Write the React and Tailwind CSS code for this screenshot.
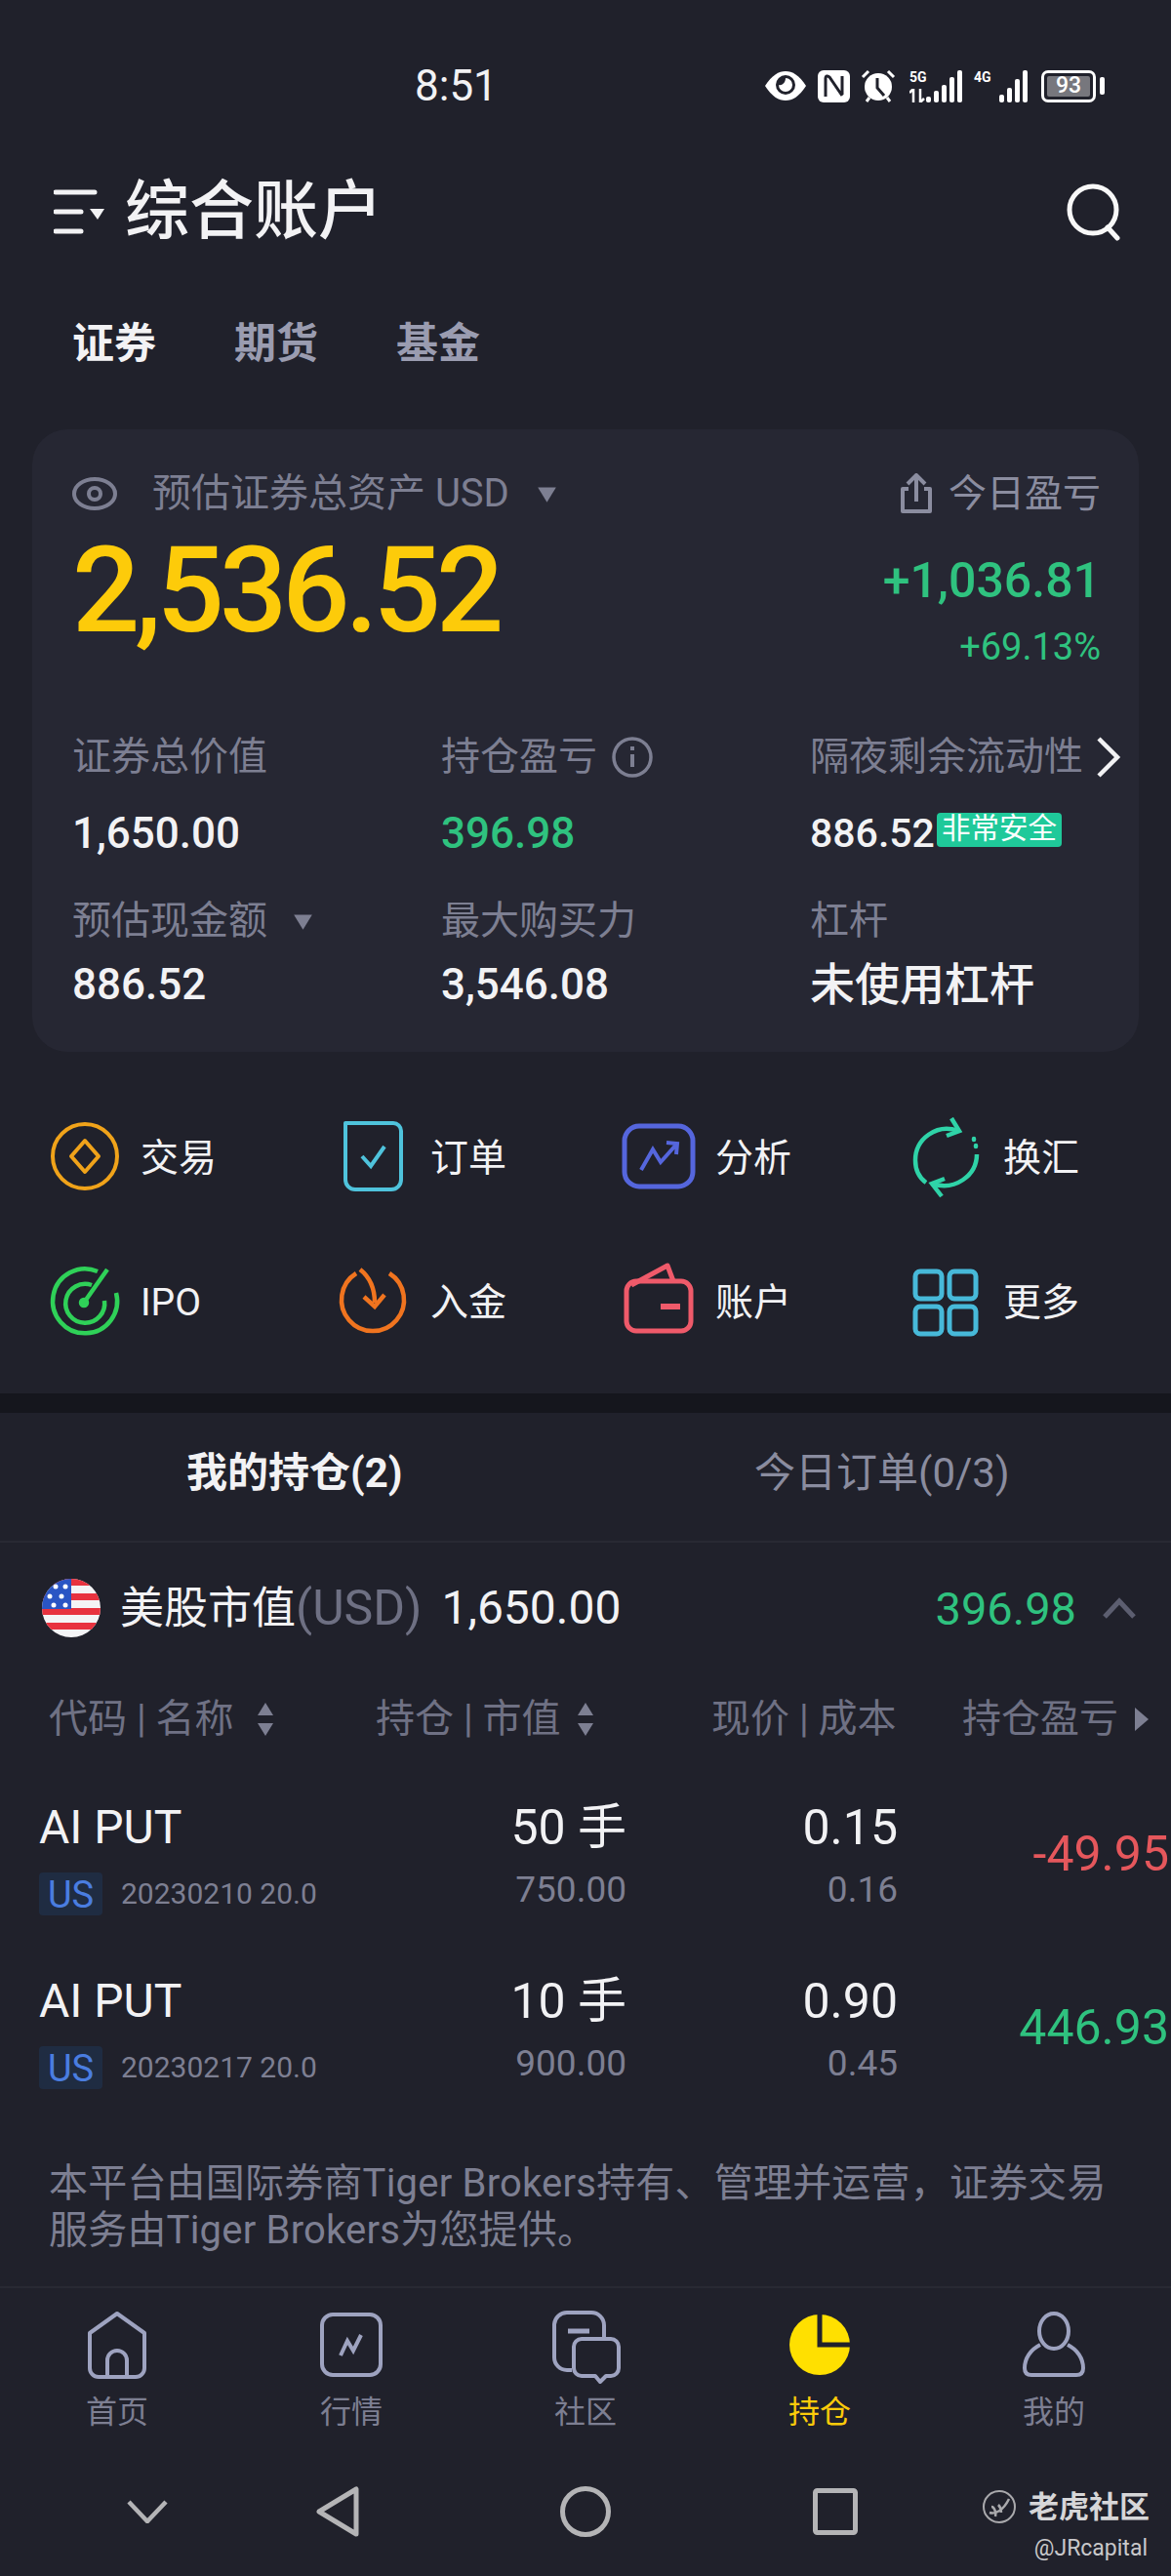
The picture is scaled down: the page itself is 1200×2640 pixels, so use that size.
const metrics = [
  { label: '证券总价值', value: '1,650.00' },
  { label: '持仓盈亏', value: '396.98', green: true, info: true },
  { label: '隔夜剩余流动性', value: '886.52', badge: '非常安全' },
  { label: '预估现金额', value: '886.52', caret: true },
  { label: '最大购买力', value: '3,546.08' },
  { label: '杠杆', value: '未使用杠杆', big: true },
]

const positions = [
  { date: '20230210 20.0', qty: '50 手', mv: '750.00', price: '0.15', cost: '0.16', pnl: '-49.95', loss: true },
  { date: '20230217 20.0', qty: '10 手', mv: '900.00', price: '0.90', cost: '0.45', pnl: '446.93' },
]

function Caret({ className }) {
  return (
    <svg viewBox="0 0 18 16" className={className}>
      <path d="M1 2h16L9 15z" fill="#7d7f92" />
    </svg>
  )
}

function SortArrows() {
  return (
    <svg viewBox="0 0 20 38" className="w-[20px] h-[38px]">
      <path d="M10 2l8 13H2zM10 36L2 23h16z" fill="#7d7f92" />
    </svg>
  )
}

function Bars({ heights }) {
  return (
    <div className="flex items-end gap-[3px] h-[33px]">
      {heights.map((h, i) => (
        <svg key={i} viewBox="0 0 5 33" className="w-[5px] h-[33px]">
          <rect x="0" y={33 - h} width="5" height={h} rx="2" fill="#fff" />
        </svg>
      ))}
    </div>
  )
}

function StatusIcons() {
  return (
    <div className="flex items-center">
      <svg viewBox="0 0 44 32" className="w-[44px] h-[32px]">
        <path d="M1 16C8 5 15 1 22 1s14 4 21 15c-7 11-14 15-21 15S8 27 1 16z" fill="#fff" />
        <circle cx="22" cy="15" r="10" fill="#20212b" />
        <path d="M22 8a7 7 0 1 1-7 7c3 1 7-2 7-7z" fill="#fff" />
      </svg>
      <svg viewBox="0 0 33 33" className="w-[33px] h-[33px] ml-[11px]">
        <rect width="33" height="33" rx="6" fill="#fff" />
        <path d="M8 27V8c0-2 2-3 4-1l13 19M25 6v19" fill="none" stroke="#20212b" strokeWidth="3" />
      </svg>
      <svg viewBox="0 0 36 34" className="w-[36px] h-[34px] ml-[11px]">
        <circle cx="18" cy="18" r="14" fill="#fff" />
        <path d="M17 9v10l7 8" fill="none" stroke="#20212b" strokeWidth="3" />
        <path d="M2 8l6-6M34 8l-6-6M6 33l3-4M30 33l-3-4" stroke="#fff" strokeWidth="3" />
      </svg>
      <div className="relative w-[54px] h-[33px] ml-[14px]">
        <span className="absolute left-0 top-0 text-[14px] leading-[14px] font-bold text-white">5G</span>
        <svg viewBox="0 0 16 14" className="absolute left-0 bottom-0 w-[16px] h-[14px]">
          <path d="M4 0v14M0 4l4-4M11 0v14l4-4" fill="none" stroke="#fff" strokeWidth="2.5" />
        </svg>
        <div className="absolute right-0 bottom-0">
          <Bars heights={[6, 12, 18, 26, 33]} />
        </div>
      </div>
      <div className="relative w-[55px] h-[33px] ml-[12px]">
        <span className="absolute left-0 top-0 text-[14px] leading-[14px] font-bold text-white">4G</span>
        <div className="absolute right-0 bottom-0">
          <Bars heights={[8, 15, 24, 33]} />
        </div>
      </div>
      <div className="ml-[14px] w-[56px] h-[33px] rounded-[7px] border-[3px] border-white p-[3px]">
        <div className="h-full rounded-[2px] bg-[#77777d] flex items-center justify-center text-[23px] font-medium text-white">93</div>
      </div>
      <div className="ml-[4px] w-[5px] h-[18px] rounded-[2px] bg-white" />
    </div>
  )
}

const actionIcons = {
  trade: (
    <g fill="none" stroke="#f0a31a" strokeWidth="4">
      <circle cx="39" cy="40" r="33" />
      <path d="M39 24l14 16-14 16-14-16z" strokeLinejoin="round" />
    </g>
  ),
  order: (
    <g fill="none" stroke="#4fc3dc" strokeWidth="4">
      <path d="M18 6h40a8 8 0 0 1 8 8v50a10 10 0 0 1-10 10H19a10 10 0 0 1-10-10V6z" strokeLinejoin="round" />
      <path d="M26 40l9 10 14-20" />
    </g>
  ),
  analyze: (
    <g fill="none" stroke="#5566dd" strokeWidth="5">
      <rect x="3" y="9" width="70" height="62" rx="15" />
      <path d="M20 54l12-21 8 13 16-18M46 26l11 1-1 11" strokeWidth="4" />
    </g>
  ),
  exchange: (
    <g fill="none" stroke="#2fd3a8" strokeWidth="4.5">
      <path d="M50 14C28 6 6 22 6 44c0 10 4 18 11 23" />
      <path d="M43 1l8 13-13 5" />
      <path d="M23 68c23 8 46-8 46-30" />
      <path d="M33 81l-10-13 13-5" />
      <path d="M66 22v1M68 29v1" strokeLinecap="round" />
    </g>
  ),
  ipo: (
    <g fill="none" stroke="#2fd158" strokeWidth="4.5">
      <path d="M52 10A33 33 0 1 0 71 32" />
      <path d="M46 24a20 20 0 1 0 13 16" />
      <path d="M38 42L62 8" />
      <circle cx="38" cy="42" r="3" fill="#2fd158" />
    </g>
  ),
  deposit: (
    <g fill="none" stroke="#f0741f" strokeWidth="4.5">
      <path d="M54 12a32 32 0 1 1-34 0" />
      <path d="M24 8c10 8 15 20 15 34M28 36l11 10 10-12" />
    </g>
  ),
  account: (
    <g fill="none" stroke="#ef5a6a" strokeWidth="5">
      <rect x="5" y="20" width="66" height="51" rx="10" />
      <path d="M10 24L47 4l6 16" strokeLinejoin="round" />
      <path d="M40 46h20" strokeWidth="6" />
    </g>
  ),
  more: (
    <g fill="none" stroke="#47b9d9" strokeWidth="5">
      <rect x="6" y="10" width="27" height="28" rx="5" />
      <rect x="41" y="10" width="27" height="28" rx="5" />
      <rect x="6" y="46" width="27" height="28" rx="5" />
      <rect x="41" y="46" width="27" height="28" rx="5" />
    </g>
  ),
}

const actions = [
  { icon: 'trade', label: '交易' },
  { icon: 'order', label: '订单' },
  { icon: 'analyze', label: '分析' },
  { icon: 'exchange', label: '换汇' },
  { icon: 'ipo', label: 'IPO' },
  { icon: 'deposit', label: '入金' },
  { icon: 'account', label: '账户' },
  { icon: 'more', label: '更多' },
]

const navItems = [
  {
    label: '首页',
    icon: (
      <g fill="none" stroke="#9ea3c0" strokeWidth="4">
        <path d="M8 24L36 4l28 20v36a9 9 0 0 1-9 9H17a9 9 0 0 1-9-9z" strokeLinejoin="round" />
        <path d="M26 68V52a10 10 0 0 1 20 0v16" />
      </g>
    ),
  },
  {
    label: '行情',
    icon: (
      <g fill="none" stroke="#9ea3c0" strokeWidth="4">
        <rect x="6" y="5" width="60" height="62" rx="11" />
        <path d="M25 47l7-15 6 10 8-16" />
      </g>
    ),
  },
  {
    label: '社区',
    icon: (
      <g fill="none" stroke="#9ea3c0" strokeWidth="4">
        <path d="M22 62h-5a13 13 0 0 1-13-13V15A13 13 0 0 1 17 3h25a13 13 0 0 1 13 13v14" />
        <path d="M18 22h22" strokeWidth="5" />
        <path d="M32 30h30a8 8 0 0 1 8 8v22a8 8 0 0 1-8 8h-5l-6 6-5-6H32a8 8 0 0 1-8-8V38a8 8 0 0 1 8-8z" strokeLinejoin="round" />
      </g>
    ),
  },
  {
    label: '持仓',
    active: true,
    icon: (
      <g>
        <circle cx="36" cy="36" r="31" fill="#ffe000" />
        <path d="M36 3v33h31" fill="none" stroke="#20212b" strokeWidth="5" />
      </g>
    ),
  },
  {
    label: '我的',
    icon: (
      <g fill="none" stroke="#9ea3c0" strokeWidth="4">
        <ellipse cx="36" cy="22" rx="15" ry="18" />
        <path d="M22 36C12 41 6 50 6 60c0 5 3 7 7 7h46c4 0 7-2 7-7 0-10-6-19-16-24" />
      </g>
    ),
  },
]

function Flag() {
  return (
    <svg viewBox="0 0 60 60" className="w-[60px] h-[60px]">
      <defs>
        <clipPath id="flag-clip">
          <circle cx="30" cy="30" r="30" />
        </clipPath>
      </defs>
      <g clipPath="url(#flag-clip)">
        <rect width="60" height="60" fill="#f4f4f6" />
        <rect y="0" width="60" height="7" fill="#e8323f" />
        <rect y="15" width="60" height="7" fill="#e8323f" />
        <rect y="30" width="60" height="7" fill="#e8323f" />
        <rect y="45" width="60" height="7" fill="#e8323f" />
        <rect width="30" height="31" fill="#2a55c4" />
        <circle cx="14" cy="8" r="2.5" fill="#fff" />
        <circle cx="24" cy="8" r="2.5" fill="#fff" />
        <circle cx="8" cy="18" r="2.5" fill="#fff" />
        <circle cx="20" cy="18" r="2.5" fill="#fff" />
        <circle cx="12" cy="27" r="2.5" fill="#fff" />
        <circle cx="24" cy="27" r="2.5" fill="#fff" />
      </g>
    </svg>
  )
}

export default function App() {
  return (
    <div className="relative w-[1200px] h-[2640px] overflow-hidden bg-[#20212b] text-[#f2f2f4] font-['Roboto','Noto_Sans_CJK_SC',sans-serif]">
      {/* status bar */}
      <div className="flex items-center h-[72px] mt-[52px] pl-[425px] pr-[68px]">
        <span className="text-[44px] leading-none">8:51</span>
        <div className="ml-auto"><StatusIcons /></div>
      </div>

      {/* header */}
      <div className="flex items-center h-[92px] mt-[47px] pl-[55px] pr-[50px]">
        <svg viewBox="0 0 52 50" className="w-[52px] h-[50px]">
          <path d="M2 5h40M2 25h26M2 45h26" stroke="#f2f2f4" strokeWidth="5" strokeLinecap="round" />
          <path d="M37 22h15l-7 11z" fill="#f2f2f4" />
        </svg>
        <span className="ml-[21px] text-[66px] leading-none font-medium">综合账户</span>
        <svg viewBox="0 0 58 60" className="ml-auto w-[58px] h-[60px]">
          <circle cx="28" cy="28" r="24" fill="none" stroke="#f8f8f8" strokeWidth="5" />
          <path d="M43 46l10 11" stroke="#f8f8f8" strokeWidth="5" strokeLinecap="round" />
        </svg>
      </div>

      {/* tabs */}
      <div className="flex items-center gap-[80px] h-[60px] mt-[59px] pl-[74px] text-[43px] leading-none font-bold text-[#9a9cb0]">
        <span className="text-[#f2f2f4]">证券</span>
        <span>期货</span>
        <span>基金</span>
      </div>

      {/* asset card */}
      <div className="mx-[33px] mt-[58px] h-[638px] rounded-[36px] bg-[#262733] pl-[41px] pr-[39px] pt-[44px]">
        <div className="flex items-center h-[44px] text-[#7d7f92]">
          <svg viewBox="0 0 46 36" className="w-[46px] h-[36px]">
            <ellipse cx="23" cy="18" rx="21" ry="15" fill="none" stroke="#7d7f92" strokeWidth="4" />
            <circle cx="23" cy="18" r="6" fill="none" stroke="#7d7f92" strokeWidth="4" />
          </svg>
          <span className="ml-[36px] text-[40px] leading-none">预估证券总资产 USD</span>
          <Caret className="ml-[28px] w-[21px] h-[19px]" />
          <svg viewBox="0 0 38 42" className="ml-auto w-[38px] h-[42px]">
            <path d="M11 16H5v23h28V16h-6M19 29V3M10 11l9-9 9 9" fill="none" stroke="#8b8da0" strokeWidth="4" strokeLinejoin="round" />
          </svg>
          <span className="ml-[14px] text-[39px] leading-none text-[#8b8da0]">今日盈亏</span>
        </div>
        <div className="flex justify-between h-[176px]">
          <span className="pt-[20px] text-[122px] leading-[116px] font-medium text-[#fdcb0a] tracking-[-5px]">2,536.52</span>
          <div className="flex flex-col items-end pt-[37px]">
            <span className="text-[50px] leading-[60px] font-medium text-[#2fc27f]">+1,036.81</span>
            <span className="mt-[15px] text-[38px] leading-[46px] text-[#2fc27f]">+69.13%</span>
          </div>
        </div>
        <div className="grid grid-cols-[378px_378px_1fr] mt-[46px]">
          {metrics.map((m, i) => (
            <div key={m.label} className={i < 3 ? 'h-[168px]' : 'h-[150px]'}>
              <div className="relative flex items-center h-[52px] text-[40px] leading-none text-[#7d7f92]">
                <span>{m.label}</span>
                {m.info && (
                  <svg viewBox="0 0 44 44" className="ml-[14px] w-[44px] h-[44px]">
                    <circle cx="22" cy="22" r="19" fill="none" stroke="#7d7f92" strokeWidth="3.5" />
                    <path d="M22 19v13M22 11v4" stroke="#7d7f92" strokeWidth="4" />
                  </svg>
                )}
                {m.caret && <Caret className="ml-[26px] w-[21px] h-[19px]" />}
                {m.badge && (
                  <svg viewBox="0 0 28 44" className="absolute left-[292px] top-[4px] w-[28px] h-[44px]">
                    <path d="M4 3l19 19L4 41" fill="none" stroke="#f2f2f4" strokeWidth="4.5" />
                  </svg>
                )}
              </div>
              <div className={`flex items-center ${i < 3 ? 'mt-[24px]' : 'mt-[11px]'} h-[56px] ${m.badge ? 'text-[41px]' : m.big ? 'text-[46px]' : 'text-[44px]'} font-medium leading-none ${m.green ? 'text-[#2fc27f]' : 'text-[#f2f2f4]'}`}>
                <span>{m.value}</span>
                {m.badge && (
                  <span className="ml-[2px] mb-[8px] h-[35px] px-[5px] rounded-[4px] bg-[#1fc99a] text-[29.5px] leading-[33px] font-normal text-white">{m.badge}</span>
                )}
              </div>
            </div>
          ))}
        </div>
      </div>

      {/* quick actions */}
      <div className="grid grid-cols-[297px_292px_295px_1fr] auto-rows-[148px] pl-[48px] mt-[35px]">
        {actions.map((a) => (
          <div key={a.label} className="flex items-center gap-[16px]">
            <svg viewBox="0 0 80 84" className="w-[80px] h-[84px] shrink-0">{actionIcons[a.icon]}</svg>
            <span className="text-[39px] leading-none">{a.label}</span>
          </div>
        ))}
      </div>

      {/* separator */}
      <div className="h-[20px] mt-[19px] bg-[#15161d]" />

      {/* holdings tabs */}
      <div className="flex h-[133px] pb-[8px] border-b-2 border-[#282933]">
        <div className="w-[600px] flex items-center pl-[191px] text-[42px] leading-none font-bold">我的持仓(2)</div>
        <div className="flex items-center pl-[173px] text-[42px] leading-none text-[#8a8c9f]">今日订单(0/3)</div>
      </div>

      {/* market summary */}
      <div className="flex items-center h-[134px] pl-[43px] pr-[36px]">
        <Flag />
        <span className="ml-[20px] text-[45px] leading-none">美股市值</span>
        <span className="text-[50px] leading-none text-[#6e7083]">(USD)</span>
        <span className="ml-[20px] text-[48px] leading-none">1,650.00</span>
        <span className="ml-auto text-[47px] leading-none text-[#2fc27f]">396.98</span>
        <svg viewBox="0 0 34 22" className="ml-[27px] w-[34px] h-[22px]">
          <path d="M2 20L17 4l15 16" fill="none" stroke="#5c5e70" strokeWidth="5" />
        </svg>
      </div>

      {/* table head */}
      <div className="relative flex items-center h-[50px] mt-[22px] text-[40px] leading-none text-[#6f7184] whitespace-nowrap">
        <span className="ml-[50px] w-[192px]">代码 | 名称</span>
        <span className="ml-[20px]"><SortArrows /></span>
        <span className="ml-[103px] w-[190px]">持仓 | 市值</span>
        <span className="ml-[15px]"><SortArrows /></span>
        <span className="ml-[119px] w-[191px]">现价 | 成本</span>
        <span className="ml-[66px]">持仓盈亏</span>
        <svg viewBox="0 0 16 26" className="ml-[16px] w-[16px] h-[26px]">
          <path d="M1 1l14 12L1 25z" fill="#7d7f92" />
        </svg>
      </div>

      {/* positions */}
      <div className="mt-[50px]">
        {positions.map((p) => (
          <div key={p.date} className="grid grid-cols-[324px_278px_278px_278px] h-[178px] pl-[40px]">
            <div className="whitespace-nowrap">
              <div className="h-[72px] flex items-center text-[48px] leading-none">AI PUT</div>
              <div className="flex items-center mt-[10px]">
                <span className="w-[65px] h-[44px] rounded-[4px] bg-[#1f2c42] text-center text-[38px] leading-[46px] text-[#4a7de0]">US</span>
                <span className="ml-[19px] text-[30px] leading-none text-[#7d7f92]">{p.date}</span>
              </div>
            </div>
            <div className="text-right">
              <div className="h-[72px] flex items-center justify-end text-[50px] leading-none">{p.qty}</div>
              <div className="mt-[5px] h-[44px] flex items-center justify-end text-[37px] leading-none text-[#7d7f92]">{p.mv}</div>
            </div>
            <div className="text-right">
              <div className="h-[72px] flex items-center justify-end text-[50px] leading-none">{p.price}</div>
              <div className="mt-[5px] h-[44px] flex items-center justify-end text-[37px] leading-none text-[#7d7f92]">{p.cost}</div>
            </div>
            <div className={`h-[126px] flex items-center justify-end text-[50px] leading-none ${p.loss ? 'text-[#e5575c]' : 'text-[#2fc27f]'}`}>{p.pnl}</div>
          </div>
        ))}
      </div>

      {/* disclaimer */}
      <p className="mt-[21px] mx-[50px] text-[40px] leading-[48px] text-[#7d7f92] tracking-[0.2px]">
        本平台由国际券商Tiger Brokers持有、管理并运营，证券交易服务由Tiger Brokers为您提供。
      </p>

      {/* bottom nav */}
      <div className="grid grid-cols-5 h-[180px] mt-[33px] border-t-2 border-[#282933] pt-[22px]">
        {navItems.map((n) => (
          <div key={n.label} className="flex flex-col items-center">
            <svg viewBox="0 0 72 76" className="w-[72px] h-[76px]">{n.icon}</svg>
            <span className={`mt-[13px] text-[32px] leading-none ${n.active ? 'text-[#fdcb0a]' : 'text-[#7d7f92]'}`}>{n.label}</span>
          </div>
        ))}
      </div>

      {/* system nav */}
      <div className="flex items-center h-[60px] mt-[21px] pl-[130px]">
        <svg viewBox="0 0 42 24" className="w-[42px] h-[24px]">
          <path d="M2 2l19 20L40 2" fill="none" stroke="#b4b4b6" strokeWidth="4.5" />
        </svg>
        <svg viewBox="0 0 46 52" className="ml-[151px] w-[46px] h-[52px]">
          <path d="M42 3v46L4 26z" fill="none" stroke="#b4b4b6" strokeWidth="5" strokeLinejoin="round" />
        </svg>
        <svg viewBox="0 0 52 52" className="ml-[205px] w-[52px] h-[52px]">
          <circle cx="26" cy="26" r="23.5" fill="none" stroke="#b4b4b6" strokeWidth="5" />
        </svg>
        <svg viewBox="0 0 46 48" className="ml-[207px] w-[46px] h-[48px]">
          <rect x="2.5" y="2.5" width="41" height="43" rx="2" fill="none" stroke="#b4b4b6" strokeWidth="5" />
        </svg>
      </div>

      {/* watermark */}
      <div className="absolute left-[1006px] top-[2551px] flex items-center">
        <svg viewBox="0 0 36 36" className="w-[36px] h-[36px]">
          <circle cx="18" cy="18" r="16" fill="none" stroke="#a9a9ac" strokeWidth="2" />
          <path d="M8 24c6 2 14-2 20-14M10 18c3 0 5 6 4 10M17 16c2 2 3 5 3 8" fill="none" stroke="#a9a9ac" strokeWidth="2.5" />
        </svg>
        <span className="ml-[12px] text-[31px] leading-none font-bold text-[#d6d6d8]">老虎社区</span>
      </div>
      <span className="absolute right-[24px] top-[2600px] text-[23px] leading-none text-[#c8c8ca]">@JRcapital</span>
    </div>
  )
}
